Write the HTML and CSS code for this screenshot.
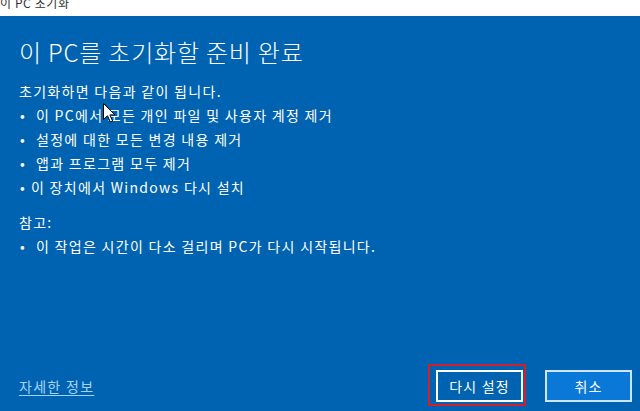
FILE: index.html
```html
<!doctype html>
<html>
<head>
    <meta charset="utf-8">
    <title>이 PC 초기화</title>
    <link rel="stylesheet" href="styles.css">
</head>
<body>

<div class="titlebar"><span class="title">이 PC 초기화</span></div>

<div class="dialog">
    <h1 class="heading">이 PC를 초기화할 준비 완료</h1>

    <div class="intro">초기화하면 다음과 같이 됩니다.</div>
    <div class="item"><span class="dot">•</span>이 PC에서 모든 개인 파일 및 사용자 계정 제거</div>
    <div class="item"><span class="dot">•</span>설정에 대한 모든 변경 내용 제거</div>
    <div class="item"><span class="dot">•</span>앱과 프로그램 모두 제거</div>
    <div class="item"><span class="dot dot-tight">•</span>이 장치에서 Windows 다시 설치</div>

    <div class="note">참고:</div>
    <div class="item"><span class="dot">•</span>이 작업은 시간이 다소 걸리며 PC가 다시 시작됩니다.</div>

    <div class="footer">
        <a class="more" href="#">자세한 정보</a>
        <div class="buttons">
            <button class="btn btn-focus">다시 설정</button>
            <button class="btn btn-cancel">취소</button>
        </div>
    </div>
</div>

<div class="highlight"></div>

<svg class="cursor" width="13" height="20" viewBox="0 0 13 20">
    <path d="M0.5 0.5 L0.5 16.5 L4.5 12.8 L7.3 19 L9.6 18 L6.9 11.9 L12 11.9 Z" fill="#fff" stroke="#000" stroke-width="1"/>
</svg>

</body>
</html>
```

FILE: styles.css
```css
body {
    margin: 0;
    height: 411px;
    overflow: hidden;
    background: #0063b1;
    color: #fff;
    font-family: "Noto Sans CJK KR", "Noto Sans", sans-serif;
}

.titlebar {
    height: 16px;
    background: #fff;
    overflow: hidden;
}
.title {
    display: block;
    margin-top: -5px;
    font-size: 12px;
    line-height: 16px;
    letter-spacing: 0.6px;
    color: #333;
}

.dialog {
    position: relative;
    height: 395px;
    box-sizing: border-box;
    padding: 0 8px 9px 19px;
    display: flex;
    flex-direction: column;
}

.heading {
    margin: 20px 0 11px;
    font-size: 24px;
    font-weight: 300;
    line-height: 32px;
    letter-spacing: 0.8px;
}

.intro,
.note,
.item {
    font-size: 14px;
    line-height: 24px;
    letter-spacing: 1.3px;
}
.note {
    margin-top: 11px;
}
.item {
    display: flex;
}
.dot {
    width: 16px;
    padding-left: 1px;
    letter-spacing: 0;
}
.dot-tight {
    width: 11px;
}

.footer {
    margin-top: auto;
    display: flex;
    align-items: center;
    justify-content: space-between;
}
.more {
    color: #a6d3f5;
    font-size: 14px;
    letter-spacing: 1.3px;
    text-decoration: underline;
    text-underline-offset: 3px;
}
.buttons {
    display: flex;
    gap: 22px;
}
.btn {
    width: 87px;
    height: 32px;
    border: 2px solid #fff;
    background: #0063b1;
    color: #fff;
    font-family: inherit;
    font-size: 14px;
    letter-spacing: 1.2px;
    padding: 0;
}
.btn-cancel {
    background: #0a78d6;
    border-color: #cfe6fa;
}

.highlight {
    position: absolute;
    left: 428px;
    top: 364px;
    width: 94px;
    height: 38px;
    border: 2px solid #d0202e;
}

.cursor {
    position: absolute;
    left: 103px;
    top: 103px;
}
```
